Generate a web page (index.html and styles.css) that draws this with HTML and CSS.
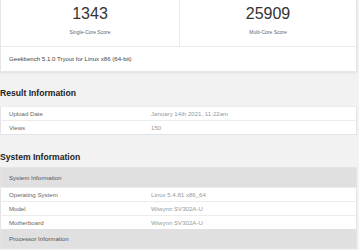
FILE: index.html
```html
<!DOCTYPE html>
<html lang="en">
<head>
  <meta charset="UTF-8">
  <meta name="viewport" content="width=device-width, initial-scale=1">
  <title>Geekbench Result</title>
  <link rel="stylesheet" href="styles.css">
</head>
<body>
  <div class="page">

    <!-- Scores -->
    <div class="card scores">
      <div class="score-row">
        <div class="score">
          <div class="score-value">1343</div>
          <div class="score-name">Single-Core Score</div>
        </div>
        <div class="score">
          <div class="score-value">25909</div>
          <div class="score-name">Multi-Core Score</div>
        </div>
      </div>
      <div class="score-note">Geekbench 5.1.0 Tryout for Linux x86 (64-bit)</div>
    </div>

    <!-- Result Information -->
    <h3 class="section-title">Result Information</h3>
    <table class="info">
      <tr><td class="name">Upload Date</td><td class="value">January 14th 2021, 11:22am</td></tr>
      <tr><td class="name">Views</td><td class="value">150</td></tr>
    </table>

    <!-- System Information -->
    <h3 class="section-title second">System Information</h3>
    <table class="info">
      <tr class="group"><th colspan="2">System Information</th></tr>
      <tr><td class="name">Operating System</td><td class="value">Linux 5.4.81 x86_64</td></tr>
      <tr><td class="name">Model</td><td class="value">Wiwynn SV302A-U</td></tr>
      <tr><td class="name">Motherboard</td><td class="value">Wiwynn SV302A-U</td></tr>
      <tr class="group"><th colspan="2">Processor Information</th></tr>
    </table>

  </div>
</body>
</html>
```

FILE: styles.css
```css
body {
  font-family: "Liberation Sans", Arial, sans-serif;
  background: #f2f2f2;
  margin: 0;
  padding: 0;
  color: #555;
}

.page {
  width: 357px;
}

.card {
  background: white;
  border: 1px solid #e6e6e6;
  border-top: none;
  box-shadow: 0 1px 2px rgba(0,0,0,0.08);
}

.score-row {
  display: grid;
  grid-template-columns: 179px 1fr;
  height: 46px;
  border-bottom: 1px solid #ececec;
}

.score {
  text-align: center;
  padding-top: 5px;
}

.score:first-child {
  border-right: 1px solid #ececec;
}

.score-value {
  font-size: 16px;
  line-height: 17px;
  color: #333;
}

.score-name {
  font-size: 5px;
  line-height: 7px;
  margin-top: 7px;
  color: #666;
}

.score-note {
  font-size: 6.1px;
  line-height: 24px;
  padding-left: 8px;
  color: #444;
}

.section-title {
  font-size: 8.6px;
  line-height: 12px;
  font-weight: bold;
  color: #222;
  margin: 15px 0 7px 0;
}

.section-title.second {
  margin: 16px 0 4px 0;
}

.info {
  width: 357px;
  border-collapse: collapse;
  background: white;
  border: 1px solid #e4e4e4;
  font-size: 6.1px;
}

.info td {
  height: 13px;
  padding: 0;
  border-top: 1px solid #ececec;
}

.info td.name {
  width: 142px;
  padding-left: 8px;
  color: #666;
}

.info td.value {
  color: #999;
}

.group th {
  background: #e0e0e0;
  text-align: left;
  font-weight: normal;
  color: #555;
  height: 19px;
  padding: 0 0 0 8px;
}
```
